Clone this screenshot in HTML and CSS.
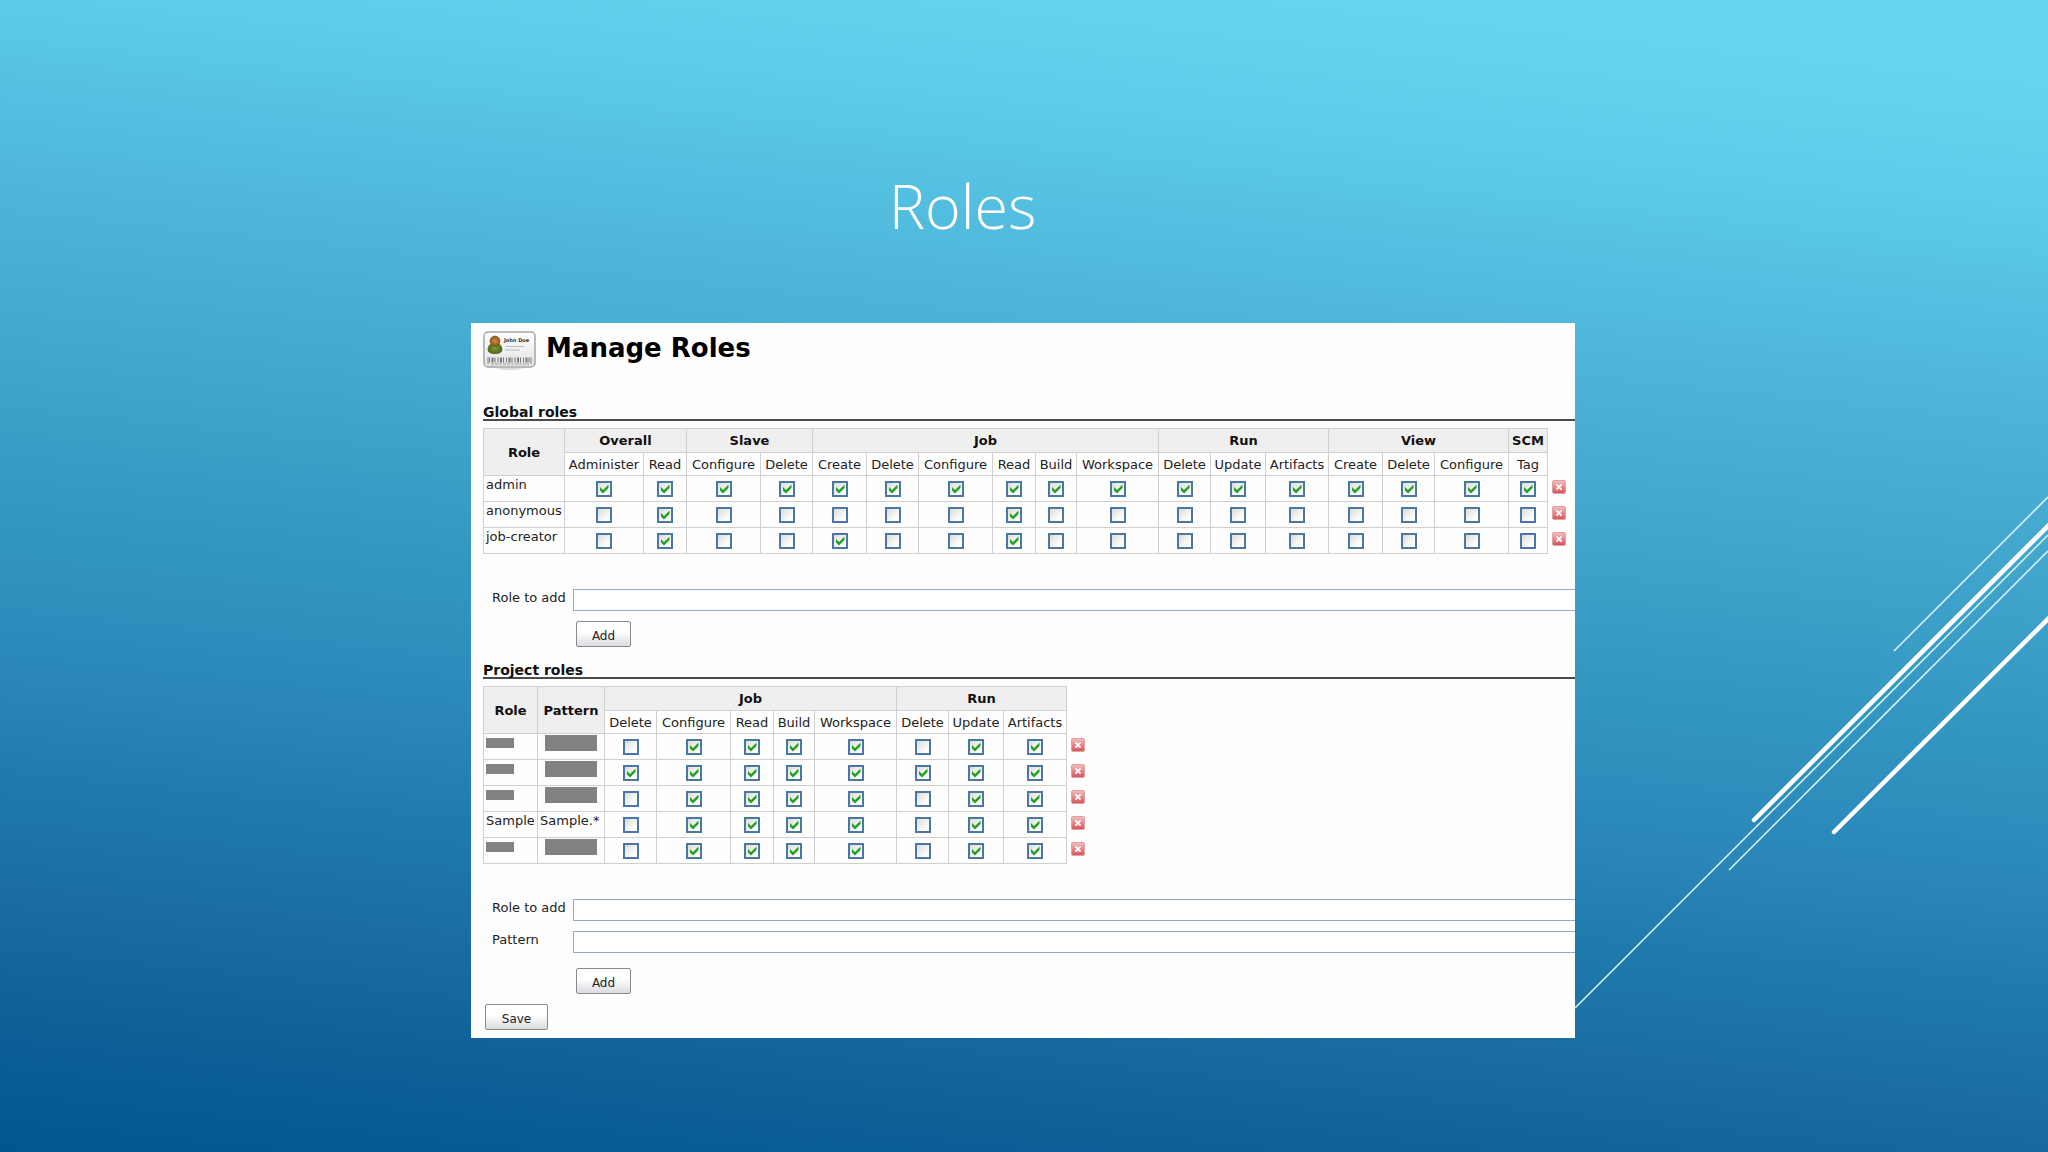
FILE: index.html
```html
<!DOCTYPE html>
<html lang="en">
<head>
  <meta charset="UTF-8" />
  <meta name="viewport" content="width=device-width, initial-scale=1.0"/>
  <title>Roles</title>
  <link rel="stylesheet" href="styles.css">
</head>
<body>
  <svg class="streaks" viewBox="0 0 2048 1152" preserveAspectRatio="none" aria-hidden="true">
    <g stroke="#e4f8fc" stroke-width="1.5">
      <path d="M1894 651 2048 497"/>
      <path d="M1575 1008 2048 535"/>
      <path d="M1729 870 2048 551"/>
    </g>
    <g stroke="#fff" stroke-width="4.5" stroke-linecap="round">
      <path d="M1754 820 2050 524"/>
      <path d="M1834 832 2050 617"/>
    </g>
  </svg>

  <header class="slide-header">
    <h1>Roles</h1>
  </header>

  <main class="slide">
    <form class="panel">
      <div class="panel-title">
        <svg class="badge" viewBox="0 0 54 40" aria-hidden="true">
          <defs>
            <linearGradient id="cardFill" x1="0" y1="0" x2="0" y2="1">
              <stop offset="0" stop-color="#fff"/>
              <stop offset="1" stop-color="#e2e2e2"/>
            </linearGradient>
            <radialGradient id="head"><stop offset="0" stop-color="#d08a3c"/><stop offset="1" stop-color="#93561b"/></radialGradient>
            <radialGradient id="torso"><stop offset="0" stop-color="#7c9a35"/><stop offset="1" stop-color="#4b6a17"/></radialGradient>
          </defs>
          <path d="M12 37h30l-9 2H21z" fill="#ddd"/>
          <rect x="1" y="1" width="51" height="35" rx="4" fill="url(#cardFill)" stroke="#a5a5a9" stroke-width="1.5"/>
          <path d="M5 19c0-5 3-7 7-7s7 2 7 7c0 5-14 5-14 0z" fill="url(#torso)" stroke="#46601a" stroke-width=".6"/>
          <circle cx="12" cy="10" r="5" fill="url(#head)" stroke="#7c4a1b" stroke-width=".6"/>
          <text x="21" y="11" class="badge-name">John Doe</text>
          <path d="M23 15.500h18M22 19h15" stroke="#bbb"/>
          <path d="M6 29h42" stroke="#777" stroke-width="5" stroke-dasharray="1 1.500 2 1 1 2"/>
          <path d="M5 26v7M48 26v7" stroke="#888"/>
          <path d="M8 33h38" stroke="#999" stroke-dasharray="3 1"/>
        </svg>
        <h2>Manage Roles</h2>
      </div>

      <h3>Global roles</h3>
      <table class="roles" id="globalRoles"></table>
      <div class="field">
        <label for="globalRole">Role to add</label>
        <input type="text" id="globalRole">
      </div>
      <button type="button" class="btn add">Add</button>

      <h3>Project roles</h3>
      <table class="roles" id="projectRoles"></table>
      <div class="field">
        <label for="projectRole">Role to add</label>
        <input type="text" id="projectRole">
      </div>
      <div class="field">
        <label for="pattern">Pattern</label>
        <input type="text" id="pattern">
      </div>
      <button type="button" class="btn add">Add</button>

      <button type="button" class="btn save">Save</button>
    </form>
  </main>

  <script>
    // 1 = permission granted, null = hidden name
    const globalRoles = {
      heads: ['Role'],
      groups: {
        Overall: ['Administer', 'Read'],
        Slave: ['Configure', 'Delete'],
        Job: ['Create', 'Delete', 'Configure', 'Read', 'Build', 'Workspace'],
        Run: ['Delete', 'Update', 'Artifacts'],
        View: ['Create', 'Delete', 'Configure'],
        SCM: ['Tag']
      },
      rows: [
        [['admin'], '11111111111111111'],
        [['anonymous'], '01000001000000000'],
        [['job-creator'], '01001001000000000']
      ]
    };

    const projectRoles = {
      heads: ['Role', 'Pattern'],
      groups: {
        Job: ['Delete', 'Configure', 'Read', 'Build', 'Workspace'],
        Run: ['Delete', 'Update', 'Artifacts']
      },
      rows: [
        [[null, null], '01111011'],
        [[null, null], '11111111'],
        [[null, null], '01111011'],
        [['Sample', 'Sample.*'], '01111011'],
        [[null, null], '01111011']
      ]
    };

    const cross = '<svg viewBox="0 0 14 14" aria-hidden="true"><path d="M4 4l6 6M10 4l-6 6"/></svg>';

    function renderTable(id, data) {
      const groups = Object.entries(data.groups);
      const perms = groups.flatMap(([group, names]) => names);

      const cols = data.heads.concat(perms)
        .map(name => `<col class="col-${name.toLowerCase()}">`).join('');
      const heads = data.heads.map(h => `<th rowspan="2">${h}</th>`).join('');
      const groupCells = groups.map(([g, names]) => `<th colspan="${names.length}">${g}</th>`).join('');
      const permCells = perms.map(p => `<td class="perm">${p}</td>`).join('');

      const rows = data.rows.map(([names, flags], r) => {
        const nameCells = names.map((n, i) =>
          `<td class="name">${n || `<span class="redacted ${data.heads[i].toLowerCase()}"></span>`}</td>`).join('');
        const boxes = perms.map((p, i) =>
          `<td><input type="checkbox" aria-label="${names[0] || 'Role ' + (r + 1)} ${p}" ${flags[i] === '1' ? 'checked' : ''}></td>`).join('');
        return `<tr>${nameCells}${boxes}<td class="remove"><button type="button" aria-label="Remove role">${cross}</button></td></tr>`;
      }).join('');

      document.getElementById(id).innerHTML =
        `<colgroup>${cols}</colgroup>
        <thead><tr>${heads}${groupCells}</tr><tr>${permCells}</tr></thead>
        <tbody>${rows}</tbody>`;
    }

    renderTable('globalRoles', globalRoles);
    renderTable('projectRoles', projectRoles);
  </script>
</body>
</html>
```
FILE: styles.css
```css
* {
  box-sizing: border-box;
}

body {
  margin: 0;
  min-height: 100vh;
  font-family: "DejaVu Sans", Verdana, sans-serif;
  font-size: 13px;
  color: #222;
  background: linear-gradient(186deg, #67d6f1 4%, #5dcee9 14%, #4fb7dc 28%, #43a6cd 41%, #3396c1 54%, #2a87b8 65%, #1f7aac 73%, #1a6da1 81%, #0e6197 90%, #005690 100%);
}

h1, h2, h3 {
  margin: 0;
}

.streaks {
  position: absolute;
  top: 0;
  left: 0;
  width: 100%;
  height: 100%;
  z-index: -1;
}

.slide-header {
  padding: 160px 6% 71px 0;
  text-align: center;
}

.slide-header h1 {
  font-family: "Open Sans", "Noto Sans", sans-serif;
  font-size: 61px;
  font-weight: 300;
  line-height: 92px;
  color: #fff;
}

.slide {
  display: grid;
  grid-template-columns: 471fr 1104fr 473fr;
}

.panel {
  grid-column: 2;
  padding: 8px 0 8px 12px;
  background: #fefefe;
  overflow: hidden;
}

.panel-title {
  display: flex;
  gap: 9px;
  margin-bottom: 35px;
}

.panel-title h2 {
  font-size: 26px;
  line-height: 35px;
  color: #000;
}

.badge {
  width: 54px;
  height: 40px;
}

.badge-name {
  font-size: 5px;
  font-weight: bold;
  fill: #333;
}

.panel h3 {
  margin: 17px 0 7px;
  border-bottom: 2px solid #4a4a4a;
  font-size: 14px;
  line-height: 13px;
  color: #111;
}

.roles {
  margin-bottom: 35px;
  border-collapse: collapse;
}

.roles th,
.roles td {
  height: 26px;
  padding: 0;
  border: 1px solid #d0d0d0;
  text-align: center;
  white-space: nowrap;
}

.roles thead th {
  height: 24px;
}

.roles .perm {
  height: 23px;
}

.roles th {
  background: #f0eff0;
  color: #111;
}

.roles .name {
  padding: 1px 2px;
  text-align: left;
  vertical-align: top;
}

.col-role { width: 81px; }
.col-administer { width: 79px; }
.col-read { width: 43px; }
.col-configure { width: 74px; }
.col-delete { width: 52px; }
.col-create { width: 54px; }
.col-build { width: 41px; }
.col-workspace { width: 82px; }
.col-update { width: 55px; }
.col-artifacts { width: 63px; }
.col-tag { width: 39px; }
.col-pattern { width: 67px; }

#projectRoles .col-role {
  width: 54px;
}

.redacted {
  display: block;
  background: #838184;
}

.redacted.role {
  width: 28px;
  height: 10px;
  margin-top: 3px;
}

.redacted.pattern {
  width: 52px;
  height: 16px;
  margin-left: 5px;
}

.roles input {
  display: block;
  appearance: none;
  width: 16px;
  height: 16px;
  margin: 0 auto;
  border: 2px solid #4a77a3;
  background: linear-gradient(135deg, #dcdcd8, #fff 80%);
}

.roles input:checked {
  background: url("data:image/svg+xml,%3Csvg xmlns='http://www.w3.org/2000/svg' viewBox='0 0 12 12'%3E%3Cpath d='M2 4v3.500l3 3 5.500-5.500V1.500L5 7z' fill='%2321a121'/%3E%3C/svg%3E"), linear-gradient(135deg, #dcdcd8, #fff 80%);
}

.roles .remove {
  padding-left: 4px;
  border: none;
  vertical-align: top;
}

.remove button {
  display: block;
  width: 14px;
  height: 14px;
  margin-top: 4px;
  padding: 0;
  border: 1px solid #e0a0a2;
  border-radius: 2px;
  background: linear-gradient(#f2bcbe, #d8565a);
}

.remove svg {
  display: block;
  width: 12px;
  height: 12px;
}

.remove path {
  stroke: #fff;
  stroke-width: 2;
}

.field {
  display: grid;
  grid-template-columns: 81px 1fr;
  margin: 0 0 10px 9px;
}

.field + .field {
  margin-bottom: 15px;
}

.field label {
  line-height: 18px;
}

.field input {
  width: 100%;
  height: 22px;
  padding: 0 4px;
  border: 1px solid #8fadc8;
  border-right: none;
  background: #fff;
  font: inherit;
}

.btn {
  display: block;
  height: 26px;
  padding: 3px 0 0;
  border: 1px solid #8a8a8e;
  border-radius: 2px;
  background: linear-gradient(#fff 40%, #dcdce0);
  font-family: inherit;
  font-size: 12px;
  color: #222;
}

.btn.add {
  width: 55px;
  margin: 0 0 10px 93px;
}

.btn.save {
  width: 63px;
  margin-left: 2px;
}
```
